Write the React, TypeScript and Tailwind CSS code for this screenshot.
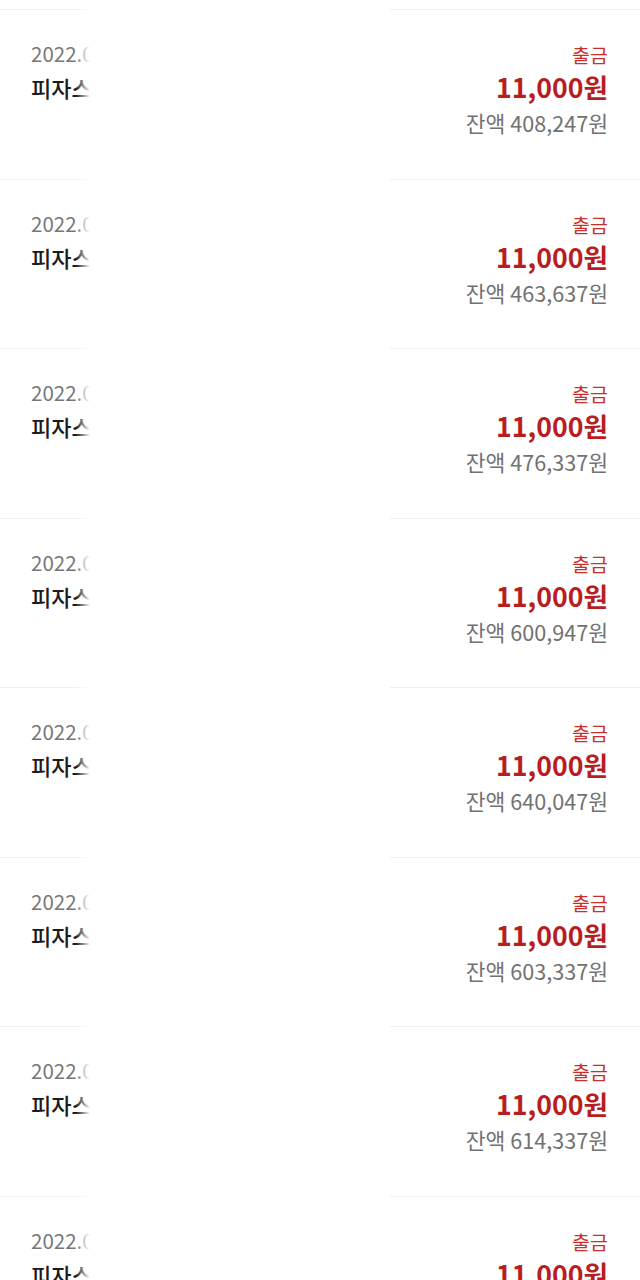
const rows = [
  { date: "2022.03.28", balance: "408,247" },
  { date: "2022.03.21", balance: "463,637" },
  { date: "2022.03.14", balance: "476,337" },
  { date: "2022.03.07", balance: "600,947" },
  { date: "2022.02.28", balance: "640,047" },
  { date: "2022.02.21", balance: "603,337" },
  { date: "2022.02.14", balance: "614,337" },
  { date: "2022.02.07", balance: "625,037" },
];

function TxRow({ date, balance }: { date: string; balance: string }) {
  return (
    <div className="flex h-[169.57px] shrink-0 justify-between border-t border-[#eef1f1] pl-[31px] pr-[32px]">
      <div className="flex flex-col pt-[31px]">
        <span className="text-[20.5px] leading-[24px] text-[#777777]">{date}</span>
        <span className="mt-[8px] text-[22px] font-medium leading-[28px] text-[#1c1c1c]">
          피자스쿨 역삼점
        </span>
      </div>
      <div className="flex flex-col items-end pt-[33px]">
        <span className="text-[19.5px] leading-[24px] text-[#c9302c]">출금</span>
        <span className="mt-[2px] text-[26.7px] font-bold leading-[36px] text-[#b81d1f]">
          11,000원
        </span>
        <span className="mt-[4px] text-[21.6px] leading-[28px] text-[#727272]">
          잔액 {balance}원
        </span>
      </div>
    </div>
  );
}

export default function App() {
  return (
    <div
      className="relative flex h-[1280px] w-[640px] flex-col overflow-hidden bg-white"
      style={{ fontFamily: '"Noto Sans CJK KR", "Noto Sans", sans-serif' }}
    >
      <div className="h-[9px] shrink-0" />
      {rows.map((r) => (
        <TxRow key={r.balance} date={r.date} balance={r.balance} />
      ))}
      {/* blur mask over the merchant column */}
      <div className="absolute bottom-0 left-[76px] top-0 w-[314px] bg-[linear-gradient(to_right,rgba(255,255,255,0)_0px,#ffffff_14px,#ffffff_100%)]" />
    </div>
  );
}
